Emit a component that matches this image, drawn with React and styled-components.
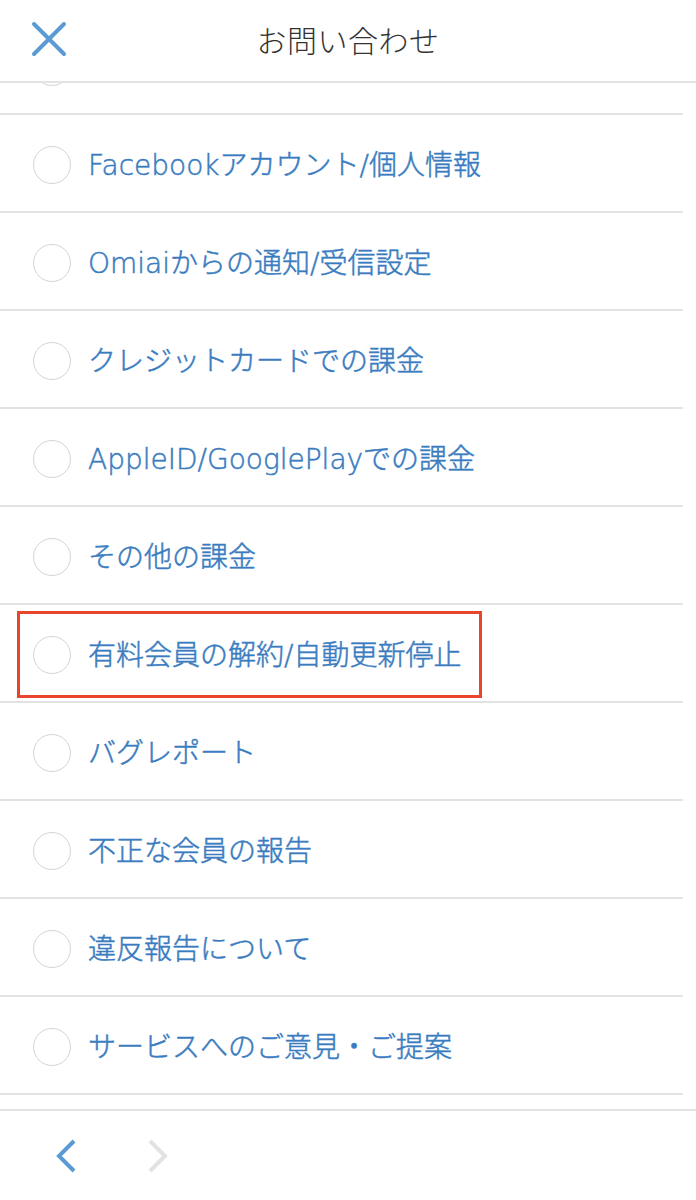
import styled, { createGlobalStyle } from "styled-components";

const GlobalStyle = createGlobalStyle`
  html, body {
    margin: 0;
    padding: 0;
    background: #ffffff;
  }
  body {
    font-family: "Noto Sans", "Noto Sans CJK JP", sans-serif;
  }
  * {
    box-sizing: border-box;
  }
`;

// first and last rows sit under the header / footer, only their edges show
const topics = [
  { label: "" },
  { label: "Facebookアカウント/個人情報" },
  { label: "Omiaiからの通知/受信設定" },
  { label: "クレジットカードでの課金" },
  { label: "AppleID/GooglePlayでの課金" },
  { label: "その他の課金" },
  { label: "有料会員の解約/自動更新停止", marked: true },
  { label: "バグレポート" },
  { label: "不正な会員の報告" },
  { label: "違反報告について" },
  { label: "サービスへのご意見・ご提案" },
  { label: "" },
];

export default function App() {
  return (
    <Screen>
      <GlobalStyle />
      <Header>
        <CloseButton aria-label="close">
          <svg width="36" height="36" viewBox="0 0 36 36">
            <path
              d="M3 3 L33 33 M33 3 L3 33"
              stroke="#5a9bd4"
              strokeWidth="4"
              strokeLinecap="round"
              fill="none"
            />
          </svg>
        </CloseButton>
        <Title>お問い合わせ</Title>
      </Header>

      <ListViewport>
        <List>
          {topics.map((topic, index) => (
            <Row key={index}>
              <Radio />
              <Label>{topic.label}</Label>
              {topic.marked && <Marker />}
            </Row>
          ))}
        </List>
      </ListViewport>

      <Footer>
        <NavButton aria-label="back">
          <svg width="24" height="34" viewBox="0 0 24 34">
            <path
              d="M20 2 L5 17 L20 32"
              stroke="#5a9bd4"
              strokeWidth="4"
              fill="none"
            />
          </svg>
        </NavButton>
        <NavButton aria-label="forward">
          <svg width="24" height="34" viewBox="0 0 24 34">
            <path
              d="M4 2 L19 17 L4 32"
              stroke="#e2e2e2"
              strokeWidth="4"
              fill="none"
            />
          </svg>
        </NavButton>
      </Footer>
    </Screen>
  );
}

const Screen = styled.div`
  width: 696px;
  height: 1200px;
  display: flex;
  flex-direction: column;
  background: #fff;
  overflow: hidden;
`;

const Header = styled.header`
  height: 83px;
  flex-shrink: 0;
  display: grid;
  grid-template-columns: 1fr auto 1fr;
  align-items: center;
  border-bottom: 2px solid #e3e3e3;
  padding-bottom: 4px;
`;

const CloseButton = styled.div`
  display: flex;
  align-items: center;
  padding-left: 31px;
`;

const Title = styled.h1`
  margin: 0;
  font-size: 30px;
  font-weight: 300;
  color: #333333;
  letter-spacing: 0.5px;
`;

const ListViewport = styled.div`
  height: 1026px;
  overflow: hidden;
`;

const List = styled.div`
  margin-top: -66px;
  display: flex;
  flex-direction: column;
`;

const Row = styled.div`
  position: relative;
  height: 98px;
  margin-right: 13px;
  display: flex;
  align-items: center;
  padding-left: 33px;
  border-bottom: 2px solid #e3e3e3;
`;

const Radio = styled.span`
  width: 38px;
  height: 38px;
  flex-shrink: 0;
  margin-top: 3px;
  border-radius: 50%;
  border: 1.5px solid #d4d4d4;
`;

const Label = styled.span`
  margin-left: 17px;
  font-family: "DejaVu Sans", "Noto Sans CJK JP", sans-serif;
  font-size: 28px;
  font-weight: 300;
  color: #3a7cc0;
  -webkit-text-stroke: 0.5px #3a7cc0;
  white-space: nowrap;
`;

const Marker = styled.span`
  position: absolute;
  left: 17px;
  top: 6px;
  width: 465px;
  height: 87px;
  border: 3.5px solid #e8452c;
  pointer-events: none;
`;

const Footer = styled.footer`
  flex: 1;
  display: flex;
  align-items: center;
  gap: 68px;
  padding-left: 54px;
  border-top: 2px solid #e3e3e3;
`;

const NavButton = styled.div`
  display: flex;
  align-items: center;
`;
